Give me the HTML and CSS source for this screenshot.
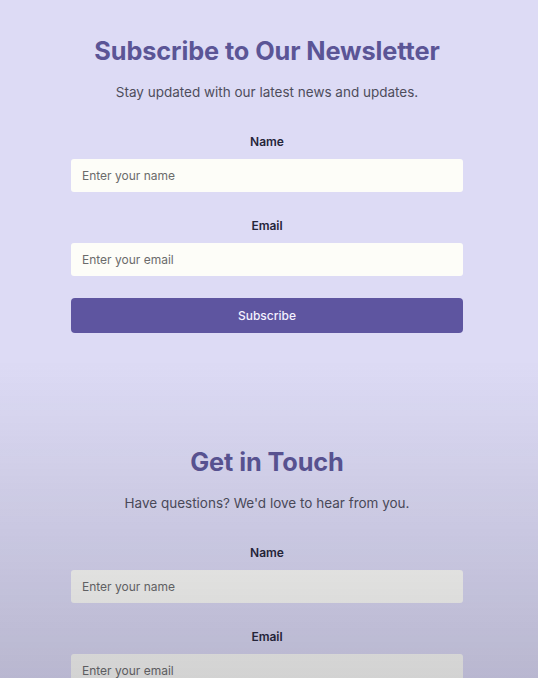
FILE: index.html
```html
<!DOCTYPE html>
<html lang="en">
<head>
<meta charset="utf-8">
<title>Newsletter</title>
<link rel="stylesheet" href="styles.css">
</head>
<body>
<main class="page">
  <section class="block">
    <h1 class="title">Subscribe to Our Newsletter</h1>
    <p class="lead">Stay updated with our latest news and updates.</p>
    <form class="form">
      <label class="label" for="n1">Name</label>
      <input class="field" id="n1" type="text" placeholder="Enter your name">
      <label class="label" for="e1">Email</label>
      <input class="field" id="e1" type="email" placeholder="Enter your email">
      <button class="btn" type="button">Subscribe</button>
    </form>
  </section>
  <section class="block block-second">
    <h1 class="title">Get in Touch</h1>
    <p class="lead">Have questions? We'd love to hear from you.</p>
    <form class="form">
      <label class="label" for="n2">Name</label>
      <input class="field" id="n2" type="text" placeholder="Enter your name">
      <label class="label" for="e2">Email</label>
      <input class="field" id="e2" type="email" placeholder="Enter your email">
    </form>
  </section>
</main>
<div class="shade"></div>
</body>
</html>
```

FILE: styles.css
```css
html, body {
  margin: 0;
  padding: 0;
}
body {
  background: #dddbf5;
  font-family: Inter, "Noto Sans", sans-serif;
  color: #222;
  padding-right: 4px;
}
.page {
  display: flex;
  flex-direction: column;
}
.block {
  display: flex;
  flex-direction: column;
  align-items: center;
  padding-top: 35px;
}
.block-second {
  padding-top: 113px;
}
.title {
  margin: 0;
  font-size: 25.3px;
  font-weight: 700;
  color: #5b5596;
  line-height: 32px;
  letter-spacing: -0.1px;
}
.lead {
  margin: 16px 0 0;
  font-size: 13.5px;
  color: #4e4d5c;
  line-height: 18px;
}
.form {
  width: 392px;
  display: flex;
  flex-direction: column;
  align-items: stretch;
  margin-top: 33px;
}
.label {
  text-align: center;
  font-size: 12px;
  font-weight: 600;
  color: #26253a;
  line-height: 16px;
}
.field {
  margin-top: 9px;
  margin-bottom: 26px;
  height: 33px;
  box-sizing: border-box;
  border: none;
  border-radius: 3px;
  background: #fdfdf8;
  padding: 0 11px;
  font-family: Inter, "Noto Sans", sans-serif;
  font-size: 12px;
  color: #333;
}
.field::placeholder {
  color: #6b6b6b;
}
.btn {
  margin-top: -4px;
  height: 35px;
  border: none;
  border-radius: 4px;
  background: #5e55a0;
  color: #f4f2ff;
  font-family: Inter, "Noto Sans", sans-serif;
  font-size: 12px;
  font-weight: 500;
}
.shade {
  position: fixed;
  inset: 0;
  pointer-events: none;
  background: linear-gradient(to bottom, rgba(30, 30, 50, 0) 0, rgba(30, 30, 50, 0) 360px, rgba(30, 30, 50, 0.19) 678px);
}
```
